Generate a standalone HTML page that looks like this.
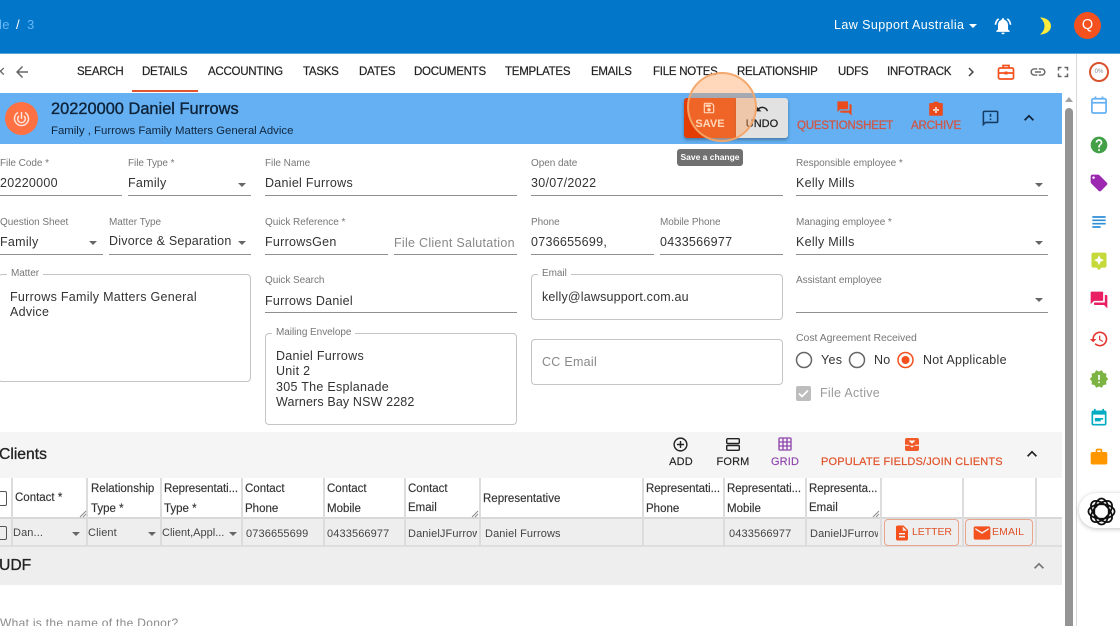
<!DOCTYPE html>
<html lang="en"><head><meta charset="utf-8"><title>Daniel Furrows</title>
<style>
html,body{margin:0;padding:0;width:1120px;height:626px;overflow:hidden;background:#fff}
body{position:relative;font-family:"Liberation Sans",sans-serif;color:#333}
#w{position:absolute;left:0;top:0;width:1120px;height:626px;overflow:hidden;filter:blur(.3px)}
.a,.t,.l,.v,.n,.h,.c,.i,.d,.u{position:absolute}
.t,.l,.v,.n,.h,.c{white-space:nowrap;line-height:16px}
.n{font-size:11.5px;top:64px;color:#222;-webkit-text-stroke:.2px #222;letter-spacing:-.25px}
.l{font-size:10px;color:#777;letter-spacing:-.05px}
.v{font-size:12.5px;color:#333;letter-spacing:.28px}
.h{font-size:11.5px;color:#333;-webkit-text-stroke:.15px #333}
.c{font-size:11px;color:#444;top:526px;letter-spacing:.12px;overflow:hidden}
.u{height:1px;background:#8f8f8f}
.d{width:0;height:0;border-left:4px solid transparent;border-right:4px solid transparent;border-top:4px solid #666}
.b{position:absolute;border:1px solid #c4c4c4;border-radius:4px;box-sizing:border-box;background:#fff}
.i{display:block}
.cl{position:absolute;top:478px;width:2px;height:68px;background:#dcdcdc}
</style></head><body><div id="w">

<!-- top bar -->
<div class="a" style="left:0;top:0;width:1120px;height:53px;background:#0277c9"></div>
<div class="a" style="left:0;top:53px;width:1120px;height:1px;background:#5aa6dc"></div>
<div class="t" style="left:-1px;top:17px;font-size:13px;color:#66b6f5;letter-spacing:.3px">le</div>
<div class="t" style="left:16px;top:17px;font-size:13px;color:#fff">/</div>
<div class="t" style="left:27px;top:17px;font-size:13px;color:#66b6f5">3</div>
<div class="t" style="left:834px;top:17px;font-size:12.5px;color:#fff;letter-spacing:.42px">Law Support Australia</div>
<div class="d" style="left:969px;top:24px;border-top-color:#fff"></div>
<svg class="i" style="left:993px;top:16px" width="20" height="20" viewBox="0 0 24 24" fill="#fff"><path d="M7.58 4.08L6.15 2.65C3.75 4.48 2.17 7.3 2.03 10.5h2c.15-2.65 1.51-4.97 3.55-6.42zm12.39 6.42h2c-.15-3.2-1.73-6.02-4.12-7.85l-1.42 1.43c2.02 1.45 3.39 3.77 3.54 6.42zM18 11c0-3.07-1.64-5.64-4.5-6.32V4c0-.83-.67-1.5-1.5-1.5s-1.5.67-1.5 1.5v.68C7.63 5.36 6 7.92 6 11v5l-2 2v1h16v-1l-2-2v-5zm-6 11c.14 0 .27-.01.4-.04.65-.14 1.18-.58 1.44-1.18.1-.24.15-.5.15-.78h-4c.01 1.1.9 2 2.01 2z"/></svg>
<svg class="i" style="left:1038px;top:17px" width="14" height="18" viewBox="0 0 14 18"><path d="M2 .5C8 .5 13 4 13 9s-5 8.500-11 8.500C5 15 6.500 12 6.500 9S5 3 2 .5z" fill="#ffeb3b"/></svg>
<div class="a" style="left:1074px;top:12px;width:27px;height:27px;border-radius:50%;background:#f4511e;color:#fff;font-size:14.500px;line-height:27px;text-align:center">Q</div>

<!-- tabs -->
<div class="t" style="left:-5px;top:64px;font-size:13px;color:#666">&#10005;</div>
<svg class="i" style="left:13px;top:63px" width="18" height="18" viewBox="0 0 24 24" fill="#666"><path d="M20 11H7.830l5.590-5.590L12 4l-8 8 8 8 1.410-1.410L7.830 13H20v-2z"/></svg>
<div class="n" style="left:77px">SEARCH</div>
<div class="n" style="left:142px">DETAILS</div>
<div class="n" style="left:208px">ACCOUNTING</div>
<div class="n" style="left:303px">TASKS</div>
<div class="n" style="left:359px">DATES</div>
<div class="n" style="left:414px">DOCUMENTS</div>
<div class="n" style="left:505px">TEMPLATES</div>
<div class="n" style="left:591px">EMAILS</div>
<div class="n" style="left:653px">FILE NOTES</div>
<div class="n" style="left:737px">RELATIONSHIP</div>
<div class="n" style="left:838px">UDFS</div>
<div class="n" style="left:887px">INFOTRACK</div>
<div class="a" style="left:132px;top:90px;width:66px;height:2px;background:#e2552f"></div>
<svg class="i" style="left:962px;top:63px" width="18" height="18" viewBox="0 0 24 24" fill="#444"><path d="M10 6L8.590 7.410 13.170 12l-4.580 4.590L10 18l6-6z"/></svg>
<svg class="i" style="left:997px;top:63px" width="18" height="18" viewBox="0 0 18 18" fill="none" stroke="#f4511e" stroke-width="1.700"><rect x="1.500" y="5" width="15" height="11" rx="1.500"/><path d="M6 5V2.500h6V5M1.500 10h15"/><rect x="7.500" y="8.500" width="3" height="3" fill="#f4511e" stroke="none"/></svg>
<svg class="i" style="left:1029px;top:63px" width="18" height="18" viewBox="0 0 24 24" fill="#666"><path d="M3.900 12c0-1.710 1.390-3.100 3.100-3.100h4V7H7c-2.760 0-5 2.240-5 5s2.240 5 5 5h4v-1.900H7c-1.710 0-3.100-1.390-3.100-3.100zM8 13h8v-2H8v2zm9-6h-4v1.900h4c1.710 0 3.100 1.390 3.100 3.100s-1.390 3.100-3.100 3.100h-4V17h4c2.760 0 5-2.240 5-5s-2.240-5-5-5z"/></svg>
<svg class="i" style="left:1054px;top:63px" width="18" height="18" viewBox="0 0 24 24" fill="#666"><path d="M7 14H5v5h5v-2H7v-3zm-2-4h2V7h3V5H5v5zm12 7h-3v2h5v-5h-2v3zM14 5v2h3v3h2V5h-5z"/></svg>

<!-- title band -->
<div class="a" style="left:0;top:93px;width:1062px;height:51px;background:#64b0f2"></div>
<div class="a" style="left:5px;top:102px;width:33px;height:33px;border-radius:50%;background:#ff7043"></div>
<svg class="i" style="left:12px;top:109px" width="19" height="19" viewBox="0 0 19 19" fill="none" stroke="#fde4d8" stroke-width="1.500"><path d="M6 3.500a7 7 0 1 0 7 0"/><path d="M7 7a3.800 3.800 0 1 0 5 0"/><path d="M9.500 3v7"/></svg>
<div class="t" style="left:51px;top:101px;font-size:16.400px;color:#0e2238;-webkit-text-stroke:.35px #0e2238">20220000 Daniel Furrows</div>
<div class="t" style="left:51px;top:123px;font-size:11.400px;color:#10263f">Family , Furrows Family Matters General Advice</div>

<div class="a" style="left:684px;top:98px;width:52px;height:40px;background:#e43c05;border-radius:3px 0 0 3px;box-shadow:0 2px 3px rgba(0,0,0,.3)"></div>
<div class="a" style="left:736px;top:98px;width:52px;height:40px;background:#e2e2e2;border-radius:0 3px 3px 0;box-shadow:0 2px 3px rgba(0,0,0,.3)"></div>
<svg class="i" style="left:702px;top:101px" width="14" height="14" viewBox="0 0 24 24" fill="#fff"><path d="M17 3H5c-1.110 0-2 .9-2 2v14c0 1.100.89 2 2 2h14c1.100 0 2-.9 2-2V7l-4-4zm2 16H5V5h11.170L19 7.830V19zm-7-7c-1.660 0-3 1.340-3 3s1.340 3 3 3 3-1.340 3-3-1.340-3-3-3zM6 6h9v4H6z"/></svg>
<div class="t" style="left:684px;width:52px;text-align:center;top:116px;font-size:11px;font-weight:bold;color:#fff">SAVE</div>
<svg class="i" style="left:755px;top:102px" width="14" height="14" viewBox="0 0 24 24" fill="#222"><path d="M12.500 8c-2.650 0-5.050.99-6.900 2.600L2 7v9h9l-3.620-3.620c1.390-1.160 3.160-1.880 5.120-1.880 3.540 0 6.550 2.310 7.600 5.500l2.370-.78C21.080 11.030 17.150 8 12.500 8z"/></svg>
<div class="t" style="left:736px;width:52px;text-align:center;top:116px;font-size:11px;color:#222;-webkit-text-stroke:.25px #222">UNDO</div>
<svg class="i" style="left:836px;top:100px" width="17" height="17" viewBox="0 0 24 24" fill="#ea4a1c"><path d="M21 6h-2v9H6v2c0 .55.45 1 1 1h11l4 4V7c0-.55-.45-1-1-1zm-4 6V3c0-.55-.45-1-1-1H3c-.55 0-1 .45-1 1v14l4-4h10c.55 0 1-.45 1-1z"/></svg>
<div class="t" style="left:795px;width:100px;text-align:center;top:118px;font-size:11.500px;color:#cf5747;-webkit-text-stroke:.3px #cf5747;letter-spacing:-.18px">QUESTIONSHEET</div>
<svg class="i" style="left:929px;top:101px" width="14" height="15" viewBox="0 0 14 15"><path d="M4.500 2V.8h5V2H12.500a1.300 1.300 0 0 1 1.300 1.300v10.200a1.300 1.300 0 0 1-1.300 1.300h-11A1.300 1.300 0 0 1 .2 13.500V3.300A1.300 1.300 0 0 1 1.500 2z" fill="#ea4a1c"/><path d="M6 6h2v2h2v2H8v2H6v-2H4V8h2z" fill="#f7c9b8"/></svg>
<div class="t" style="left:906px;width:60px;text-align:center;top:118px;font-size:11.500px;color:#cf5747;-webkit-text-stroke:.3px #cf5747;letter-spacing:-.15px">ARCHIVE</div>
<svg class="i" style="left:981px;top:109px" width="19" height="19" viewBox="0 0 24 24" fill="#163c66"><path d="M20 2H4c-1.100 0-1.990.9-1.990 2L2 22l4-4h14c1.100 0 2-.9 2-2V4c0-1.100-.9-2-2-2zm0 14H5.170L4 17.170V4h16v12zm-9-4h2v2h-2zm0-6h2v4h-2z"/></svg>
<svg class="i" style="left:1019px;top:108px" width="20" height="20" viewBox="0 0 24 24" fill="#0c2036"><path d="M12 8l-6 6 1.410 1.410L12 10.830l4.590 4.580L18 14z"/></svg>

<!-- highlight circle -->
<div class="a" style="left:687px;top:72px;width:70px;height:70px;box-sizing:border-box;border-radius:50%;background:rgba(255,160,90,.42);border:2px solid rgba(243,165,105,.95)"></div>
<!-- tooltip -->
<div class="a" style="left:677px;top:149px;width:66px;height:17px;border-radius:3px;background:#707070;color:#fff;font-size:8.500px;font-weight:bold;line-height:17px;text-align:center">Save a change</div>

<!-- form row 1 -->
<div class="l" style="left:0;top:156px">File Code *</div><div class="v" style="left:0;top:175px">20220000</div><div class="u" style="left:0;top:195px;width:122px"></div>
<div class="l" style="left:128px;top:156px">File Type *</div><div class="v" style="left:128px;top:175px">Family</div><div class="d" style="left:238px;top:183px"></div><div class="u" style="left:128px;top:195px;width:123px"></div>
<div class="l" style="left:265px;top:156px">File Name</div><div class="v" style="left:265px;top:175px">Daniel Furrows</div><div class="u" style="left:265px;top:195px;width:252px"></div>
<div class="l" style="left:531px;top:156px">Open date</div><div class="v" style="left:531px;top:175px">30/07/2022</div><div class="u" style="left:531px;top:195px;width:252px"></div>
<div class="l" style="left:796px;top:156px">Responsible employee *</div><div class="v" style="left:796px;top:175px">Kelly Mills</div><div class="d" style="left:1035px;top:183px"></div><div class="u" style="left:796px;top:195px;width:252px"></div>

<!-- form row 2 -->
<div class="l" style="left:0;top:215px">Question Sheet</div><div class="v" style="left:0;top:234px">Family</div><div class="d" style="left:89px;top:241px"></div><div class="u" style="left:0;top:254px;width:103px"></div>
<div class="l" style="left:109px;top:215px">Matter Type</div><div class="v" style="left:109px;top:233px;letter-spacing:.22px">Divorce &amp; Separation</div><div class="d" style="left:238px;top:241px"></div><div class="u" style="left:109px;top:254px;width:142px"></div>
<div class="l" style="left:265px;top:215px">Quick Reference *</div><div class="v" style="left:265px;top:234px">FurrowsGen</div><div class="u" style="left:265px;top:254px;width:123px"></div>
<div class="v" style="left:394px;top:235px;color:#888">File Client Salutation</div><div class="u" style="left:394px;top:254px;width:123px"></div>
<div class="l" style="left:531px;top:215px">Phone</div><div class="v" style="left:531px;top:234px">0736655699,</div><div class="u" style="left:531px;top:254px;width:123px"></div>
<div class="l" style="left:660px;top:215px">Mobile Phone</div><div class="v" style="left:660px;top:234px">0433566977</div><div class="u" style="left:660px;top:254px;width:123px"></div>
<div class="l" style="left:796px;top:215px">Managing employee *</div><div class="v" style="left:796px;top:234px">Kelly Mills</div><div class="d" style="left:1035px;top:241px"></div><div class="u" style="left:796px;top:254px;width:252px"></div>

<!-- boxes -->
<div class="b" style="left:-2px;top:274px;width:253px;height:108px"></div>
<div class="l" style="left:7px;top:266px;background:#fff;padding:0 4px">Matter</div>
<div class="v" style="left:10px;top:289px">Furrows Family Matters General</div>
<div class="v" style="left:10px;top:304px">Advice</div>

<div class="l" style="left:265px;top:273px">Quick Search</div><div class="v" style="left:265px;top:293px">Furrows Daniel</div><div class="u" style="left:265px;top:312px;width:252px"></div>
<div class="b" style="left:265px;top:333px;width:252px;height:92px"></div>
<div class="l" style="left:272px;top:325px;background:#fff;padding:0 4px">Mailing Envelope</div>
<div class="v" style="left:276px;top:348px">Daniel Furrows</div>
<div class="v" style="left:276px;top:363px">Unit 2</div>
<div class="v" style="left:276px;top:379px">305 The Esplanade</div>
<div class="v" style="left:276px;top:394px;letter-spacing:.14px">Warners Bay NSW 2282</div>

<div class="b" style="left:531px;top:274px;width:252px;height:46px"></div>
<div class="l" style="left:538px;top:266px;background:#fff;padding:0 4px">Email</div>
<div class="v" style="left:542px;top:289px;letter-spacing:.18px">kelly@lawsupport.com.au</div>
<div class="b" style="left:531px;top:339px;width:252px;height:46px"></div>
<div class="v" style="left:542px;top:354px;color:#888">CC Email</div>

<div class="l" style="left:796px;top:273px">Assistant employee</div><div class="d" style="left:1035px;top:298px"></div><div class="u" style="left:796px;top:312px;width:252px"></div>
<div class="l" style="left:796px;top:330px;font-size:10.500px">Cost Agreement Received</div>
<svg class="i" style="left:795px;top:351px" width="120" height="18" viewBox="0 0 120 18" fill="none"><circle cx="9" cy="9" r="7.500" stroke="#666" stroke-width="1.500"/><circle cx="62" cy="9" r="7.500" stroke="#666" stroke-width="1.500"/><circle cx="110.500" cy="9" r="7.500" stroke="#f4511e" stroke-width="1.500"/><circle cx="110.500" cy="9" r="4" fill="#f4511e"/></svg>
<div class="v" style="left:821px;top:352px">Yes</div><div class="v" style="left:874px;top:352px">No</div><div class="v" style="left:923px;top:352px">Not Applicable</div>
<svg class="i" style="left:796px;top:386px" width="15" height="15" viewBox="0 0 15 15"><rect width="15" height="15" rx="2" fill="#bdbdbd"/><path d="M3 7.500l3 3 6-6" fill="none" stroke="#fff" stroke-width="1.700"/></svg>
<div class="v" style="left:820px;top:385px;color:#9a9a9a">File Active</div>

<!-- clients band -->
<div class="a" style="left:0;top:432px;width:1062px;height:46px;background:#f5f5f5"></div>
<div class="t" style="left:-1px;top:447px;font-size:15.700px;color:#222;-webkit-text-stroke:.3px #222">Clients</div>
<svg class="i" style="left:672px;top:436px" width="17" height="17" viewBox="0 0 24 24" fill="#222"><path d="M13 7h-2v4H7v2h4v4h2v-4h4v-2h-4V7zm-1-5C6.480 2 2 6.480 2 12s4.480 10 10 10 10-4.480 10-10S17.520 2 12 2zm0 18c-4.410 0-8-3.590-8-8s3.590-8 8-8 8 3.590 8 8-3.590 8-8 8z"/></svg>
<div class="t" style="left:661px;width:40px;text-align:center;top:454px;font-size:11px;color:#222;-webkit-text-stroke:.15px #222;letter-spacing:.15px">ADD</div>
<svg class="i" style="left:726px;top:438px" width="14" height="13" viewBox="0 0 14 13" fill="none" stroke="#222" stroke-width="1.400"><rect x=".7" y=".7" width="12.600" height="4.800" rx="1"/><rect x=".7" y="7.500" width="12.600" height="4.800" rx="1"/></svg>
<div class="t" style="left:713px;width:40px;text-align:center;top:454px;font-size:11px;color:#222;-webkit-text-stroke:.15px #222;letter-spacing:.15px">FORM</div>
<svg class="i" style="left:777px;top:436px" width="16" height="16" viewBox="0 0 24 24" fill="#8e44ad"><path d="M20 2H4c-1.100 0-2 .9-2 2v16c0 1.100.9 2 2 2h16c1.100 0 2-.9 2-2V4c0-1.100-.9-2-2-2zM8 20H4v-4h4v4zm0-6H4v-4h4v4zm0-6H4V4h4v4zm6 12h-4v-4h4v4zm0-6h-4v-4h4v4zm0-6h-4V4h4v4zm6 12h-4v-4h4v4zm0-6h-4v-4h4v4zm0-6h-4V4h4v4z"/></svg>
<div class="t" style="left:765px;width:40px;text-align:center;top:454px;font-size:11px;color:#8e44ad;-webkit-text-stroke:.15px #8e44ad;letter-spacing:.15px">GRID</div>
<svg class="i" style="left:905px;top:438px" width="14" height="13" viewBox="0 0 14 13"><rect width="14" height="13" rx="2" fill="#ef5a28"/><path d="M3.500 2.500h7L7 5.800zM0 6.800h3.500L7 9.500l3.500-2.700H14v.9H0z" fill="#fff"/></svg>
<div class="t" style="left:821px;top:454px;font-size:11px;color:#e0532a;-webkit-text-stroke:.2px #e0532a;letter-spacing:.17px">POPULATE FIELDS/JOIN CLIENTS</div>
<svg class="i" style="left:1022px;top:444px" width="20" height="20" viewBox="0 0 24 24" fill="#222"><path d="M12 8l-6 6 1.410 1.410L12 10.830l4.590 4.580L18 14z"/></svg>

<!-- table -->
<div class="a" style="left:0;top:478px;width:1062px;height:40px;background:#fff"></div>
<div class="a" style="left:0;top:518px;width:1062px;height:67px;background:#eeeeee"></div>
<div class="a" style="left:0;top:517px;width:1062px;height:2px;background:#d8d8d8"></div>
<div class="a" style="left:0;top:545px;width:1062px;height:2px;background:#dedede"></div>
<div class="cl" style="left:11px"></div><div class="cl" style="left:86px"></div><div class="cl" style="left:160px"></div><div class="cl" style="left:241px"></div><div class="cl" style="left:323px"></div><div class="cl" style="left:404px"></div><div class="cl" style="left:479px"></div><div class="cl" style="left:642px"></div><div class="cl" style="left:723px"></div><div class="cl" style="left:805px"></div><div class="cl" style="left:880px"></div><div class="cl" style="left:962px"></div><div class="cl" style="left:1035px"></div>

<div class="a" style="left:-3px;top:491px;width:8px;height:13px;border:1.500px solid #555;border-radius:2px"></div>
<div class="a" style="left:-3px;top:526px;width:8px;height:12px;border:1.500px solid #555;border-radius:2px"></div>

<div class="h" style="left:15px;top:490px">Contact *</div>
<div class="h" style="left:91px;top:481px">Relationship</div><div class="h" style="left:91px;top:501px">Type *</div>
<div class="h" style="left:164px;top:481px;letter-spacing:-.05px">Representati...</div><div class="h" style="left:164px;top:501px">Type *</div>
<div class="h" style="left:245px;top:481px">Contact</div><div class="h" style="left:245px;top:501px">Phone</div>
<div class="h" style="left:327px;top:481px">Contact</div><div class="h" style="left:327px;top:501px">Mobile</div>
<div class="h" style="left:408px;top:481px">Contact</div><div class="h" style="left:408px;top:500px">Email</div>
<div class="h" style="left:483px;top:491px">Representative</div>
<div class="h" style="left:646px;top:481px;letter-spacing:-.05px">Representati...</div><div class="h" style="left:646px;top:501px">Phone</div>
<div class="h" style="left:727px;top:481px;letter-spacing:-.05px">Representati...</div><div class="h" style="left:727px;top:501px">Mobile</div>
<div class="h" style="left:809px;top:481px;letter-spacing:-.05px">Representa...</div><div class="h" style="left:809px;top:500px">Email</div>
<svg class="i" style="left:79px;top:510px" width="8" height="8" viewBox="0 0 8 8" stroke="#888"><path d="M1 7l6-6M4 7l3-3"/></svg>
<svg class="i" style="left:471px;top:510px" width="8" height="8" viewBox="0 0 8 8" stroke="#888"><path d="M1 7l6-6M4 7l3-3"/></svg>
<svg class="i" style="left:872px;top:510px" width="8" height="8" viewBox="0 0 8 8" stroke="#888"><path d="M1 7l6-6M4 7l3-3"/></svg>

<div class="c" style="left:13px;top:525px">Dan...</div><div class="d" style="left:72px;top:532px"></div>
<div class="c" style="left:88px;top:525px">Client</div><div class="d" style="left:148px;top:532px"></div>
<div class="c" style="left:162px;top:525px;letter-spacing:0">Client,Appl...</div><div class="d" style="left:229px;top:532px"></div>
<div class="c" style="left:246px">0736655699</div>
<div class="c" style="left:327px">0433566977</div>
<div class="c" style="left:408px;width:69px">DanielJFurrow</div>
<div class="c" style="left:485px">Daniel Furrows</div>
<div class="c" style="left:729px">0433566977</div>
<div class="c" style="left:810px;width:68px">DanielJFurrow</div>

<div class="a" style="left:884px;top:519px;width:75px;height:27px;box-sizing:border-box;border:1px solid #e9a48d;border-radius:4px"></div>
<svg class="i" style="left:893px;top:524px" width="18" height="18" viewBox="0 0 24 24" fill="#f4511e"><path d="M14 2H6c-1.100 0-1.990.9-1.990 2L4 20c0 1.100.89 2 1.990 2H18c1.100 0 2-.9 2-2V8l-6-6zm2 16H8v-2h8v2zm0-4H8v-2h8v2zm-3-5V3.500L18.500 9H13z"/></svg>
<div class="t" style="left:912px;top:524px;font-size:10.500px;color:#e0532a;letter-spacing:-.05px">LETTER</div>
<div class="a" style="left:965px;top:519px;width:68px;height:27px;box-sizing:border-box;border:1px solid #e9a48d;border-radius:4px"></div>
<svg class="i" style="left:972px;top:523px" width="20" height="20" viewBox="0 0 24 24" fill="#f4511e"><path d="M20 4H4c-1.100 0-1.990.9-1.990 2L2 18c0 1.100.9 2 2 2h16c1.100 0 2-.9 2-2V6c0-1.100-.9-2-2-2zm0 4l-8 5-8-5V6l8 5 8-5v2z"/></svg>
<div class="t" style="left:992px;top:524px;font-size:10.500px;color:#e0532a;letter-spacing:.1px">EMAIL</div>

<!-- UDF -->
<div class="t" style="left:-1px;top:558px;font-size:15.700px;color:#222;-webkit-text-stroke:.3px #222">UDF</div>
<svg class="i" style="left:1029px;top:556px" width="20" height="20" viewBox="0 0 24 24" fill="#777"><path d="M12 8l-6 6 1.410 1.410L12 10.830l4.590 4.580L18 14z"/></svg>
<div class="t" style="left:0;top:615px;font-size:12px;color:#8a8a8a;letter-spacing:.3px">What is the name of the Donor?</div>

<!-- scrollbar -->
<div class="a" style="left:1065px;top:108px;width:8px;height:518px;background:#949494;border-radius:4px 4px 0 0"></div>
<div class="a" style="left:1065px;top:97px;width:0;height:0;border-left:4px solid transparent;border-right:4px solid transparent;border-bottom:5px solid #a0a0a0"></div>

<!-- sidebar -->
<div class="a" style="left:1076px;top:54px;width:1px;height:572px;background:#d8d8d8"></div>
<div class="a" style="left:1089px;top:62px;width:20px;height:20px;box-sizing:border-box;border:2px solid #d9532e;border-radius:50%;text-align:center;font-size:6px;line-height:16px;color:#888">0%</div>
<svg class="i" style="left:1091px;top:96px" width="16" height="18" viewBox="0 0 18 20" fill="none" stroke="#64b0f2" stroke-width="1.900"><rect x="1" y="3" width="16" height="16" rx="1.500"/><path d="M1 7.500h16M5 .5V3M13 .5V3"/></svg>
<svg class="i" style="left:1089px;top:135px" width="20" height="20" viewBox="0 0 24 24" fill="#43a047"><path d="M12 2C6.480 2 2 6.480 2 12s4.480 10 10 10 10-4.480 10-10S17.520 2 12 2zm1 17h-2v-2h2v2zm2.070-7.750l-.9.920C13.450 12.900 13 13.500 13 15h-2v-.5c0-1.100.45-2.100 1.170-2.830l1.240-1.260c.37-.36.59-.86.59-1.410 0-1.100-.9-2-2-2s-2 .9-2 2H8c0-2.210 1.790-4 4-4s4 1.790 4 4c0 .88-.36 1.680-.93 2.250z"/></svg>
<svg class="i" style="left:1089px;top:173px" width="20" height="20" viewBox="0 0 24 24" fill="#9c27b0"><path d="M21.410 11.580l-9-9C12.050 2.220 11.550 2 11 2H4c-1.100 0-2 .9-2 2v7c0 .55.22 1.050.59 1.420l9 9c.36.36.86.58 1.410.58.55 0 1.050-.22 1.410-.59l7-7c.37-.36.59-.86.59-1.410 0-.55-.23-1.060-.59-1.420zM5.500 7C4.670 7 4 6.330 4 5.500S4.670 4 5.500 4 7 4.670 7 5.500 6.330 7 5.500 7z"/></svg>
<svg class="i" style="left:1089px;top:212px" width="20" height="20" viewBox="0 0 24 24" fill="#2e8fd6"><path d="M14 17H4v2h10v-2zm6-8H4v2h16V9zM4 15h16v-2H4v2zM4 5v2h16V5H4z"/></svg>
<svg class="i" style="left:1089px;top:251px" width="20" height="20" viewBox="0 0 24 24" fill="#c6d93a"><path d="M19 2H5c-1.100 0-2 .9-2 2v14c0 1.100.9 2 2 2h4l3 3 3-3h4c1.100 0 2-.9 2-2V4c0-1.100-.9-2-2-2zm-5.120 10.880L12 17l-1.880-4.120L6 11l4.120-1.880L12 5l1.880 4.120L18 11l-4.120 1.880z"/></svg>
<svg class="i" style="left:1089px;top:290px" width="20" height="20" viewBox="0 0 24 24" fill="#e91e63"><path d="M21 6h-2v9H6v2c0 .55.45 1 1 1h11l4 4V7c0-.55-.45-1-1-1zm-4 6V3c0-.55-.45-1-1-1H3c-.55 0-1 .45-1 1v14l4-4h10c.55 0 1-.45 1-1z"/></svg>
<svg class="i" style="left:1089px;top:329px" width="20" height="20" viewBox="0 0 24 24" fill="#e53935"><path d="M13 3c-4.970 0-9 4.030-9 9H1l3.890 3.890.07.14L9 12H6c0-3.870 3.130-7 7-7s7 3.130 7 7-3.130 7-7 7c-1.930 0-3.680-.79-4.940-2.060l-1.420 1.420C8.270 19.990 10.510 21 13 21c4.970 0 9-4.030 9-9s-4.030-9-9-9zm-1 5v5l4.280 2.540.72-1.210-3.500-2.080V8H12z"/></svg>
<svg class="i" style="left:1089px;top:369px" width="20" height="20" viewBox="0 0 24 24" fill="#7cb342"><path d="M23 12l-2.440-2.780.34-3.680-3.610-.82-1.890-3.180L12 3 8.600 1.540 6.710 4.720l-3.610.81.34 3.680L1 12l2.440 2.780-.34 3.690 3.610.82 1.890 3.180L12 21l3.400 1.460 1.890-3.180 3.610-.82-.34-3.680L23 12zm-10 5h-2v-2h2v2zm0-4h-2V7h2v6z"/></svg>
<svg class="i" style="left:1089px;top:408px" width="20" height="20" viewBox="0 0 24 24" fill="#00acc1"><path d="M17 12H7v2h10v-2zm2-9h-1V1h-2v2H8V1H6v2H5c-1.110 0-1.990.9-1.990 2L3 19c0 1.100.89 2 2 2h14c1.100 0 2-.9 2-2V5c0-1.100-.9-2-2-2zm0 16H5V8h14v11zm-5-5H7v2h7v-2z"/></svg>
<svg class="i" style="left:1089px;top:447px" width="20" height="20" viewBox="0 0 24 24" fill="#ff9800"><path d="M20 6h-4V4c0-1.110-.89-2-2-2h-4c-1.110 0-2 .89-2 2v2H4c-1.110 0-1.990.89-1.990 2L2 19c0 1.110.89 2 2 2h16c1.110 0 2-.89 2-2V8c0-1.110-.89-2-2-2zm-6 0h-4V4h4v2z"/></svg>
<div class="a" style="left:1079px;top:493px;width:60px;height:35px;border-radius:18px;background:#fff;box-shadow:0 1px 5px rgba(0,0,0,.25)"></div>
<svg class="i" style="left:1087px;top:497px" width="29" height="29" viewBox="-15 -15 30 30" fill="none" stroke="#111" stroke-width="1.800"><ellipse rx="13.500" ry="7.500"/><ellipse rx="13.500" ry="7.500" transform="rotate(45)"/><ellipse rx="13.500" ry="7.500" transform="rotate(90)"/><ellipse rx="13.500" ry="7.500" transform="rotate(135)"/></svg>
</div></body></html>
